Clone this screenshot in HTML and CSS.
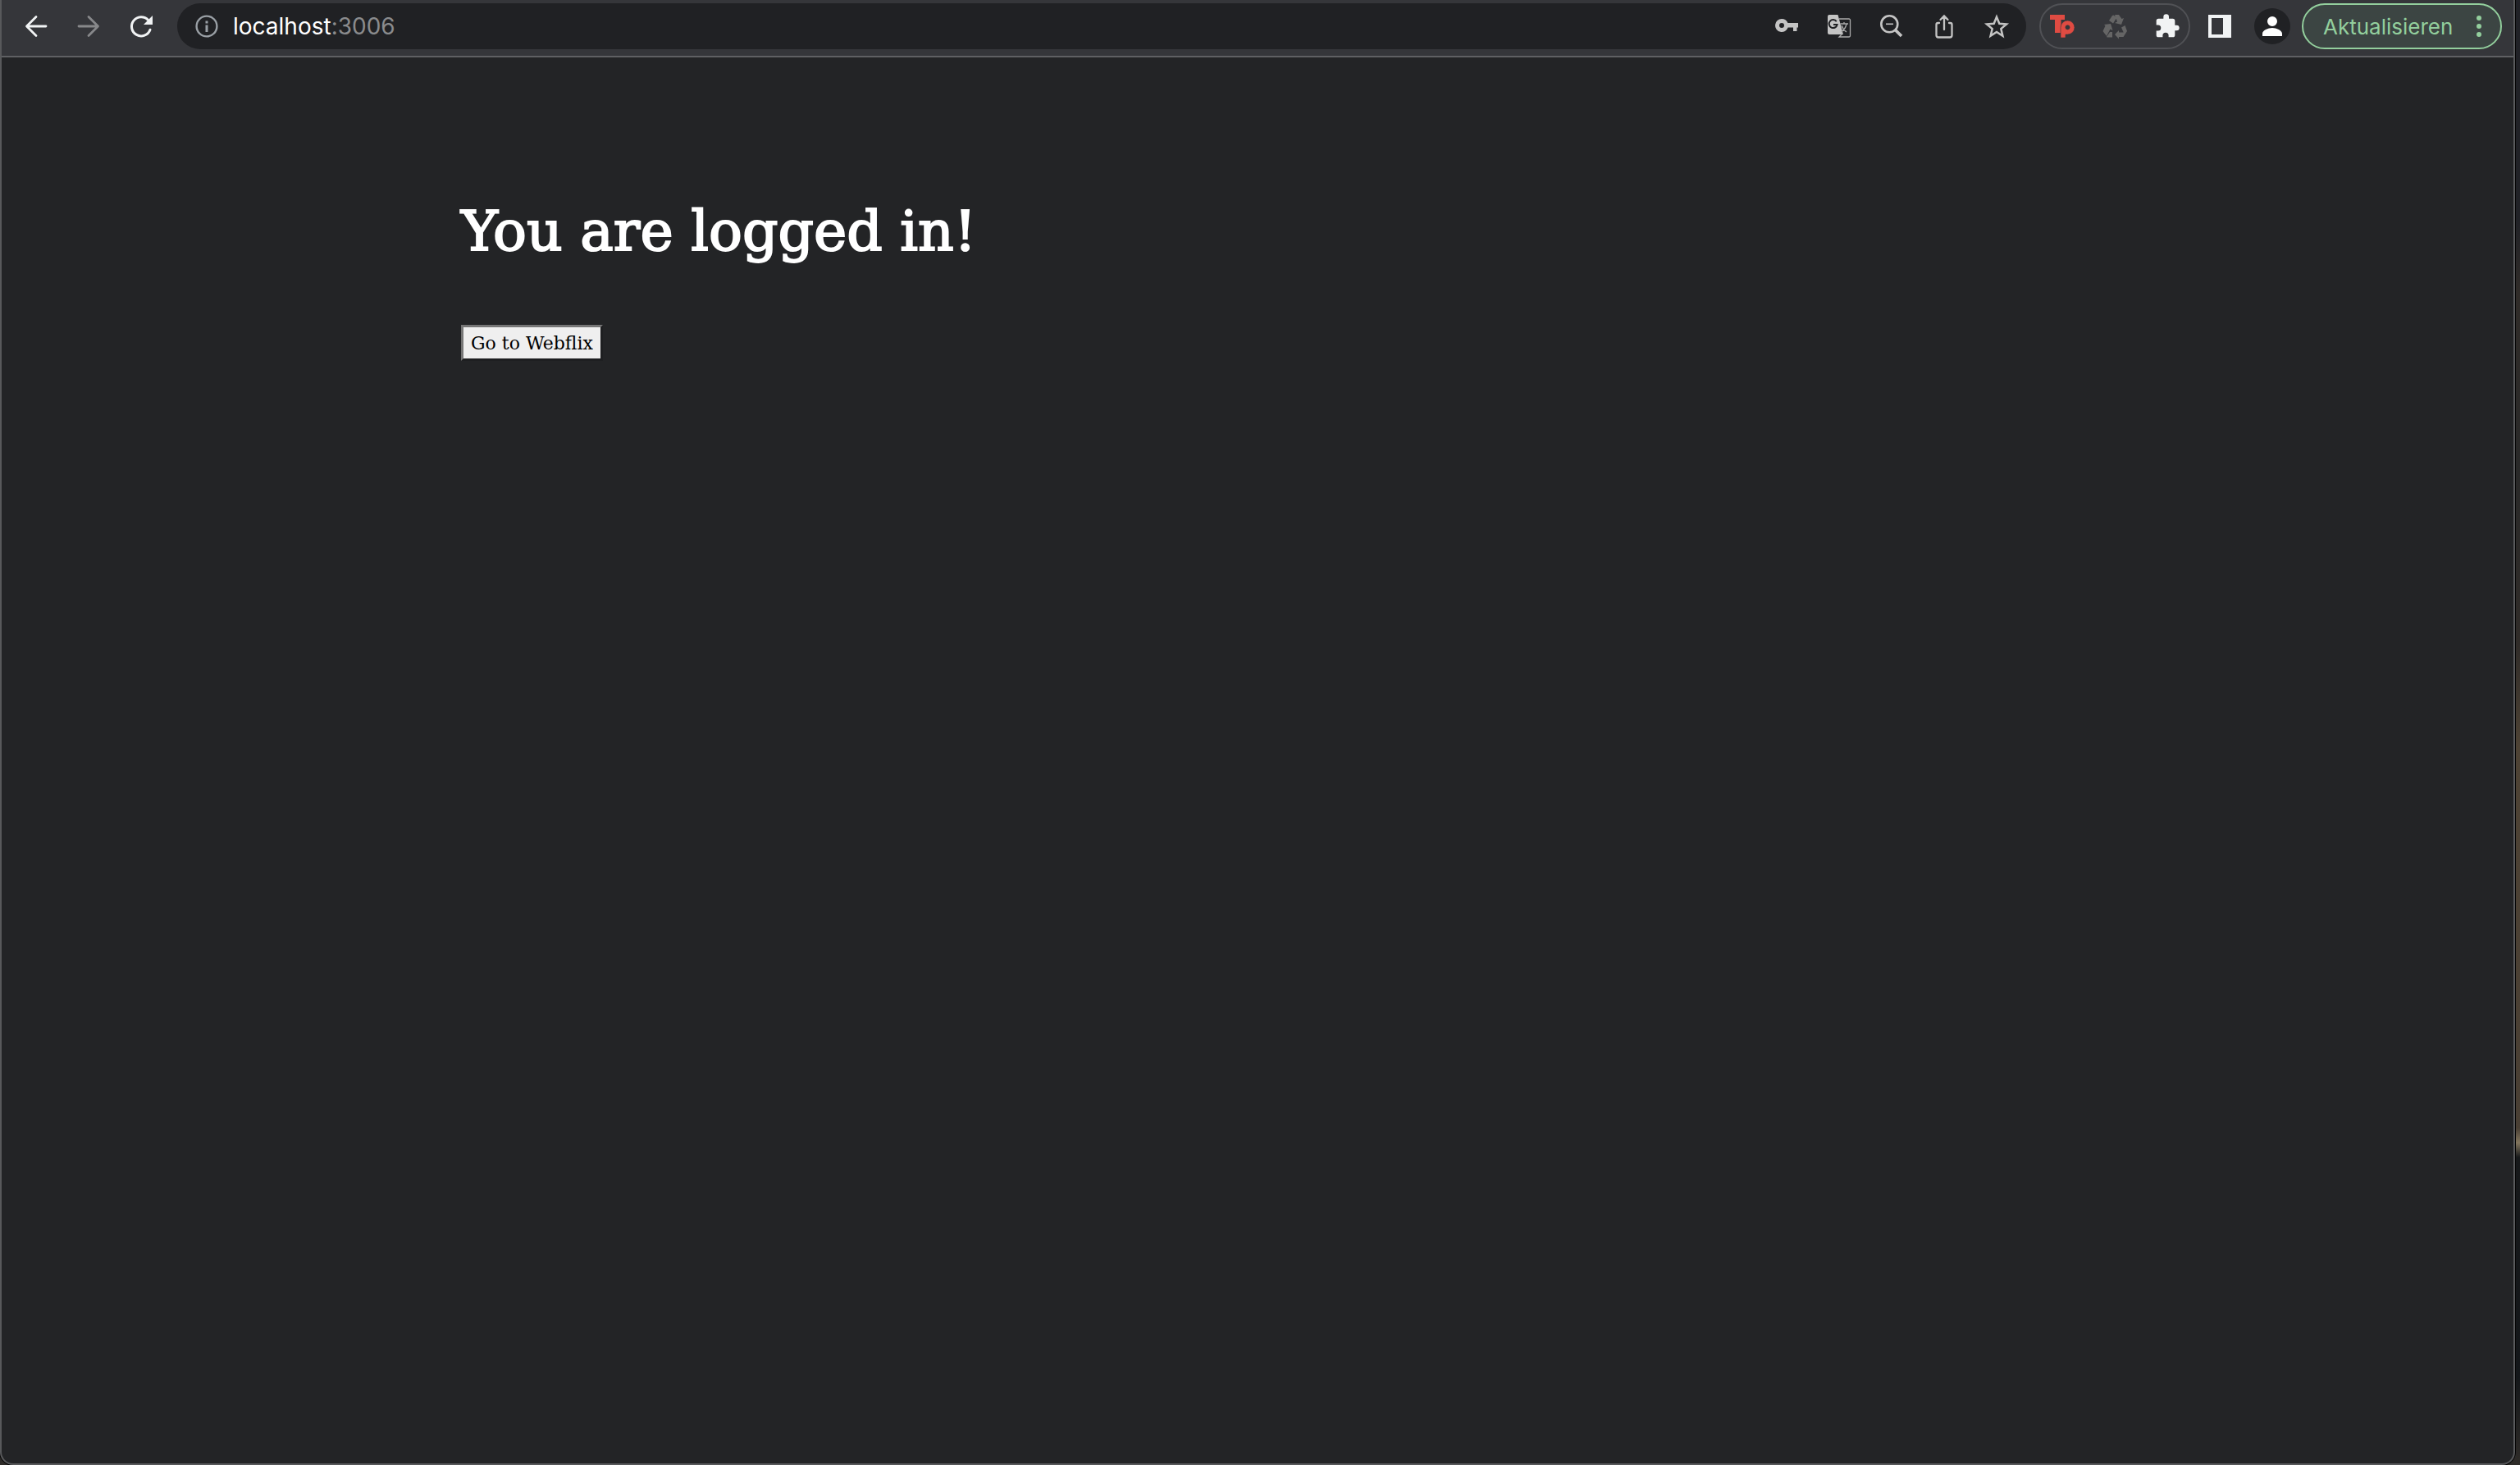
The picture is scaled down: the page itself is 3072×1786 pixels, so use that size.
FILE: index.html
```html
<!DOCTYPE html>
<html lang="en">
<head>
<meta charset="utf-8">
<title>Webflix</title>
<link rel="stylesheet" href="styles.css">
</head>
<body>
<div class="window">
  <header class="toolbar">
    <nav class="nav" aria-label="Browser navigation">
      <button class="icon-button" aria-label="Back"><svg class="icon" viewBox="0 0 32 32" fill="none" stroke="#f1f3f4" stroke-width="2.8" stroke-linecap="round" stroke-linejoin="round"><path d="M28 16H5M16 4.500 4.500 16 16 27.500"/></svg></button>
      <button class="icon-button" aria-label="Forward"><svg class="icon" viewBox="0 0 32 32" fill="none" stroke="#87888a" stroke-width="2.8" stroke-linecap="round" stroke-linejoin="round"><path d="M4 16h23M16 4.500 27.500 16 16 27.500"/></svg></button>
      <button class="icon-button" aria-label="Reload"><svg class="icon" viewBox="0 0 32 32"><path d="M27 20.200A11.600 11.600 0 1 1 24.600 8.400" fill="none" stroke="#f1f3f4" stroke-width="3" stroke-linecap="round"/><path d="M30 3v11H19z" fill="#f1f3f4"/></svg></button>
    </nav>
    <div class="address">
      <button class="address-info" aria-label="Site information"><svg class="icon" viewBox="0 0 32 32"><circle cx="16" cy="16" r="12.400" fill="none" stroke="#9aa0a6" stroke-width="2.400"/><path d="M14.500 9.500h3v3h-3zM14.500 14.500h3v8.500h-3z" fill="#9aa0a6"/></svg></button>
      <div class="url"><span class="host">localhost</span>:3006</div>
      <button class="icon-button" aria-label="Passwords"><svg class="icon" viewBox="0 0 32 32" fill="#c4c4c4"><path fill-rule="evenodd" d="M10 7a8 8 0 1 0 7.600 10.500H24V22h4.500v-4.500H30V12H17.400A8 8 0 0 0 10 7zm0 5a3 3 0 1 1 0 6 3 3 0 0 1 0-6z"/></svg></button>
      <button class="icon-button" aria-label="Translate"><svg class="icon" viewBox="0 0 32 32"><path d="M4 2h10.500L21 26H4a2 2 0 0 1-2-2V4a2 2 0 0 1 2-2z" fill="#c4c4c4"/><path d="M12.800 10.200A5 5 0 1 0 13.600 14H9" fill="none" stroke="#202124" stroke-width="2"/><path d="M16 7h12a1.500 1.500 0 0 1 1.500 1.500v19A1.500 1.500 0 0 1 28 29H16l4-4M17.500 13H27M22 11v2M25 13c-1 5-3 8-7 10M19 15c1 3 3 6 6 8" fill="none" stroke="#aaa" stroke-width="1.300"/></svg></button>
      <button class="icon-button" aria-label="Zoom"><svg class="icon" viewBox="0 0 32 32" fill="none" stroke="#c4c4c4"><circle cx="13.300" cy="13.300" r="10" stroke-width="2.600"/><path d="M9 13.300h9" stroke-width="1.600"/><path d="m20.500 20.500 7.500 7.500" stroke-width="3.800"/></svg></button>
      <button class="icon-button" aria-label="Share"><svg class="icon" viewBox="0 0 32 32" fill="none" stroke="#c4c4c4" stroke-width="2.300" stroke-linecap="round"><path d="M10 12H8.500A2 2 0 0 0 6.500 14v13A2.500 2.500 0 0 0 9 29.500h14a2.500 2.500 0 0 0 2.500-2.500V14a2 2 0 0 0-2-2H22M16 20V4M11.500 8 16 3.500 20.500 8"/></svg></button>
      <button class="icon-button" aria-label="Bookmark"><svg class="icon" viewBox="0 0 32 32" fill="none" stroke="#c4c4c4" stroke-width="2.500"><path d="m16 4.600 3.300 8.100 8.700.7-6.700 5.700 2.100 8.600-7.400-4.700-7.400 4.700 2.100-8.600L4 13.400l8.700-.7z"/></svg></button>
    </div>
    <div class="extensions">
      <button class="icon-button" aria-label="Tp extension"><svg class="icon" viewBox="0 0 32 32" fill="#df4b42"><path d="M1 2h18v6h-4.500v16H7V8H1z"/><path fill-rule="evenodd" stroke="#35363a" stroke-width=".6" d="M14 30V17.500a8.500 8.500 0 1 1 8.500 8.500H20v4zm8.500-15.300a2.600 2.600 0 1 0 0 5.200 2.600 2.600 0 0 0 0-5.200z"/></svg></button>
      <button class="icon-button" aria-label="Recycle extension"><svg class="icon" viewBox="0 0 32 32" fill="#656565"><path d="m9 9 4-6 1.500-.5 4 3-4.500 7zM16 2h5l3.500 5 2.500-1-3 8-8-2 3-1.500zM3 14l8-1 2.500 8-3-1.500L6 28l-4.500-6 3-6.500zM6 29l4-6h3v6.500H7zM24 17.500l4.500-2.500 2.500 7-3 4.500zM16 26l5-5v2.500h9l-3.500 5.500H21v2.500z"/></svg></button>
      <button class="icon-button" aria-label="Extensions"><svg class="icon" viewBox="0 0 24 24" fill="#f1f3f4"><path d="M20.500 11H19V7a2 2 0 0 0-2-2h-3.500V3.500a2.500 2.500 0 0 0-5 0V5H4a2 2 0 0 0-2 2v3.800h1.500a2.700 2.700 0 0 1 0 5.400H2V20a2 2 0 0 0 2 2h3.800v-1.500a2.700 2.700 0 0 1 5.400 0V22H17a2 2 0 0 0 2-2v-4h1.500a2.500 2.500 0 0 0 0-5z"/></svg></button>
    </div>
    <button class="icon-button" aria-label="Side panel"><svg class="icon" viewBox="0 0 32 32"><path fill="#f1f3f4" fill-rule="evenodd" d="M2 2h28v28H2zM6 6v20h14V6z"/></svg></button>
    <button class="icon-button" aria-label="Profile"><svg class="avatar" viewBox="0 0 44 44"><circle cx="22" cy="22" r="22" fill="#202124"/><path fill="#fff" d="M22 10a6 6 0 1 1 0 12 6 6 0 0 1 0-12zM10 34v-3c0-4 7-7 12-7s12 3 12 7v3z"/></svg></button>
    <button class="update">Aktualisieren<svg class="dots" viewBox="0 0 8 28" fill="#93cf9d"><circle cx="4" cy="4" r="3"/><circle cx="4" cy="14" r="3"/><circle cx="4" cy="24" r="3"/></svg></button>
  </header>
  <main class="page">
    <h1 class="title">You are logged in!</h1>
    <button class="go">Go to Webflix</button>
  </main>
</div>
</body>
</html>
```
FILE: styles.css
```css
* { box-sizing: border-box; }

body {
  margin: 0;
  padding-right: 6px;
  background: linear-gradient(#212227 0 15%, #302c29 20%, #292929 32%, #302c29 44%, #4e4335 51%, #493f34 77%, #82755d 78%, #17191b 79%, #14171a 94%, #2f2c29);
}

button {
  margin: 0;
  padding: 0;
  border: 0;
  background: none;
  color: inherit;
  font: inherit;
}

svg { display: block; }

.window {
  display: flex;
  flex-direction: column;
  min-height: 100vh;
  border: 2px solid #58595b;
  border-top: 0;
  border-radius: 0 0 16px 16px;
  background: #232426;
  box-shadow: 0 0 0 1px #050505;
  overflow: hidden;
}

.toolbar {
  display: flex;
  align-items: center;
  height: 70px;
  padding: 0 14px 4px 10px;
  border-bottom: 2px solid #5f6063;
  background: #35363a;
  font-family: Inter, "Liberation Sans", sans-serif;
  font-size: 28px;
}

.nav { display: flex; }

.icon-button {
  display: grid;
  place-items: center;
  flex: none;
  width: 64px;
  height: 52px;
}

.icon { width: 32px; height: 32px; }
.avatar { width: 44px; height: 44px; }

.address {
  display: flex;
  align-items: center;
  flex: 1;
  height: 56px;
  margin: 0 16px 0 12px;
  padding: 0 4px 0 20px;
  border-radius: 28px;
  background: #202124;
}

.address-info { margin-right: 16px; }
.url { flex: 1; color: #8a8b8d; }
.host { color: #fff; }

.extensions {
  display: flex;
  align-items: center;
  height: 56px;
  width: 184px;
  margin-right: 4px;
  justify-content: center;
  border: 2px solid #505155;
  border-radius: 28px;
}

.update {
  display: flex;
  align-items: center;
  justify-content: space-between;
  width: 244px;
  height: 56px;
  margin-left: 4px;
  padding: 0 22px 0 24px;
  border: 2px solid #93cf9d;
  border-radius: 28px;
  background: #3c4543;
  color: #93cf9d;
  font-size: 26px;
}

.dots { width: 8px; height: 28px; }

.page {
  flex: 1;
  padding: 160px 560px 0;
  font-family: "Roboto Slab", "DejaVu Serif", serif;
}

.title {
  margin: 0 0 62px;
  color: #fff;
  font-size: 68px;
  font-weight: 400;
  line-height: 104px;
  -webkit-text-stroke: 2px #fff;
}

.go {
  display: block;
  height: 44px;
  padding: 0 9px;
  border: 3px solid #767676;
  border-color: #767676 #1e1f21 #1e1f21 #767676;
  background: #efefef;
  color: #000;
  font-size: 22px;
}
```
